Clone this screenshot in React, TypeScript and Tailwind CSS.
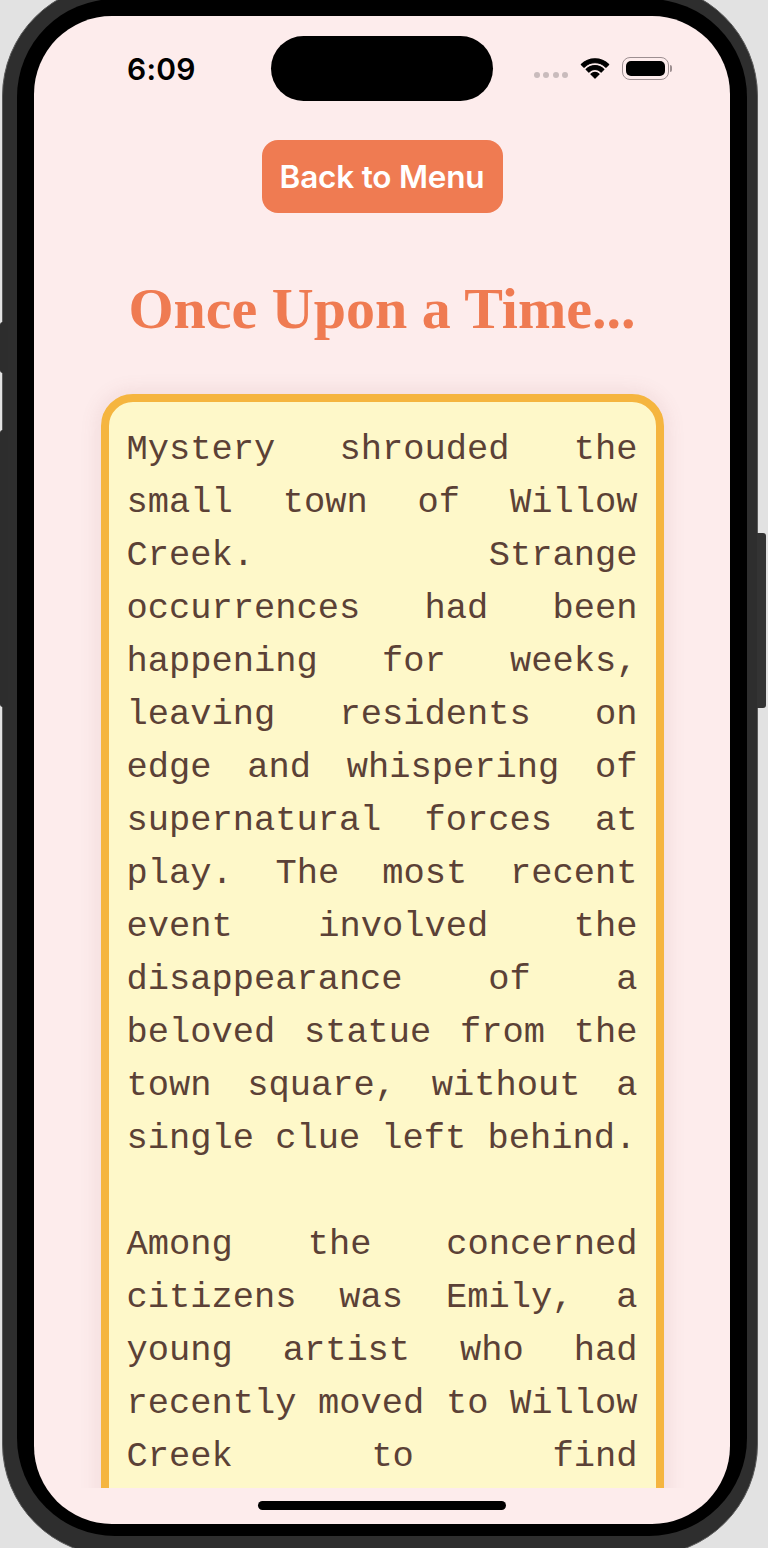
const story = `Mystery shrouded the small town of Willow Creek. Strange occurrences had been happening for weeks, leaving residents on edge and whispering of supernatural forces at play. The most recent event involved the disappearance of a beloved statue from the town square, without a single clue left behind.

Among the concerned citizens was Emily, a young artist who had recently moved to Willow Creek to find inspiration for her next masterpiece. Intrigued by the mystery, she decided to investigate on her own, armed with nothing but her sketchbook and a keen eye for detail.`

function SignalDots() {
  return (
    <div className="flex items-center gap-[3.5px] mt-[12px]">
      {[0, 1, 2, 3].map(i => (
        <span key={i} className="block w-[6px] h-[6px] rounded-full bg-[#c9bbbc]" />
      ))}
    </div>
  )
}

function WifiIcon() {
  return (
    <svg width="30" height="22" viewBox="-0.5 -0.5 31 22" className="block">
      <g fill="#000" stroke="#000" strokeWidth="1.2" strokeLinejoin="round">
        <path d="M0.86 5.86 A20 20 0 0 1 29.14 5.86 L26.31 8.69 A16 16 0 0 0 3.69 8.69 Z" />
        <path d="M5.81 10.81 A13 13 0 0 1 24.19 10.81 L21.36 13.64 A9 9 0 0 0 8.64 13.64 Z" />
        <path d="M15 20 L10.76 15.76 A6 6 0 0 1 19.24 15.76 Z" />
      </g>
    </svg>
  )
}

function BatteryIcon() {
  return (
    <div className="flex items-center">
      <div className="w-[47px] h-[23px] rounded-[8px] border-[1.5px] border-[#9d8f91] p-[3px]">
        <div className="w-full h-full rounded-[5px] bg-black" />
      </div>
      <div className="w-[2px] h-[7px] rounded-r-[2px] bg-[#9d8f91] ml-[1px]" />
    </div>
  )
}

function StatusBar() {
  return (
    <div className="flex items-center h-[65px] mt-[20px] shrink-0">
      <div className="w-[237px] pl-[93px] text-[30px] leading-none font-semibold text-black font-['Inter',sans-serif] tracking-[0.2px]">
        6:09
      </div>
      <div className="w-[222px] h-[65px] rounded-full bg-black" />
      <div className="flex-1 flex items-center justify-end gap-[12px] pr-[58px]">
        <SignalDots />
        <WifiIcon />
        <BatteryIcon />
      </div>
    </div>
  )
}

function StoryCard() {
  return (
    <div className="shrink-0 mx-auto mt-[56px] w-[563px] rounded-[32px] border-[8px] border-[#f5b53f] bg-[#fef8c9] px-[18px] pt-[22px] pb-[20px] shadow-[0_0_18px_4px_rgba(150,90,90,0.10)]">
      <p className="whitespace-pre-line text-justify text-[35.4px] leading-[53px] text-[#5b4136] font-['Liberation_Mono','Courier_New',monospace]">
        {story}
      </p>
    </div>
  )
}

function Screen() {
  return (
    <div className="w-[696px] h-[1508px] rounded-[78px] bg-[#fdecec] overflow-hidden flex flex-col">
      <StatusBar />
      <main className="flex-1 min-h-0 overflow-hidden flex flex-col pt-[39px]">
        <button className="shrink-0 mx-auto w-[241px] h-[73px] rounded-[16px] bg-[#ef7b52] text-white text-[31.5px] font-semibold font-['Inter',sans-serif] tracking-[-0.2px]">
          Back to Menu
        </button>
        <h1 className="shrink-0 mt-[67px] text-center text-[58px] leading-[58px] font-bold text-[#ef7b52] font-['Liberation_Serif',serif]">
          Once Upon a Time...
        </h1>
        <StoryCard />
      </main>
      <div className="h-[36px] shrink-0 flex justify-center pt-[13px]">
        <div className="w-[248px] h-[9px] rounded-full bg-black" />
      </div>
    </div>
  )
}

export default function App() {
  return (
    <div className="relative w-[768px] h-[1548px] overflow-hidden bg-[#e2e2e2]">
      {/* side buttons */}
      <div className="absolute left-0 top-[322px] w-[8px] h-[51px] rounded-l-[3px] bg-[#2d2d2d]" />
      <div className="absolute left-0 top-[430px] w-[8px] h-[277px] rounded-l-[3px] bg-[#2d2d2d]" />
      <div className="absolute right-[2px] top-[533px] w-[9px] h-[175px] rounded-r-[3px] bg-[#333]" />

      <div className="ml-[2px] mt-[-16px] w-[756px] h-[1572px] rounded-[112px] bg-[#2e2e2e] border border-[#5a5a5a] pl-[14px] pr-[10px] pt-[14px] pb-[18px]">
        <div className="w-[730px] h-[1537px] rounded-[98px] bg-black px-[17px] pt-[17px] pb-[13px]">
          <Screen />
        </div>
      </div>
    </div>
  )
}
